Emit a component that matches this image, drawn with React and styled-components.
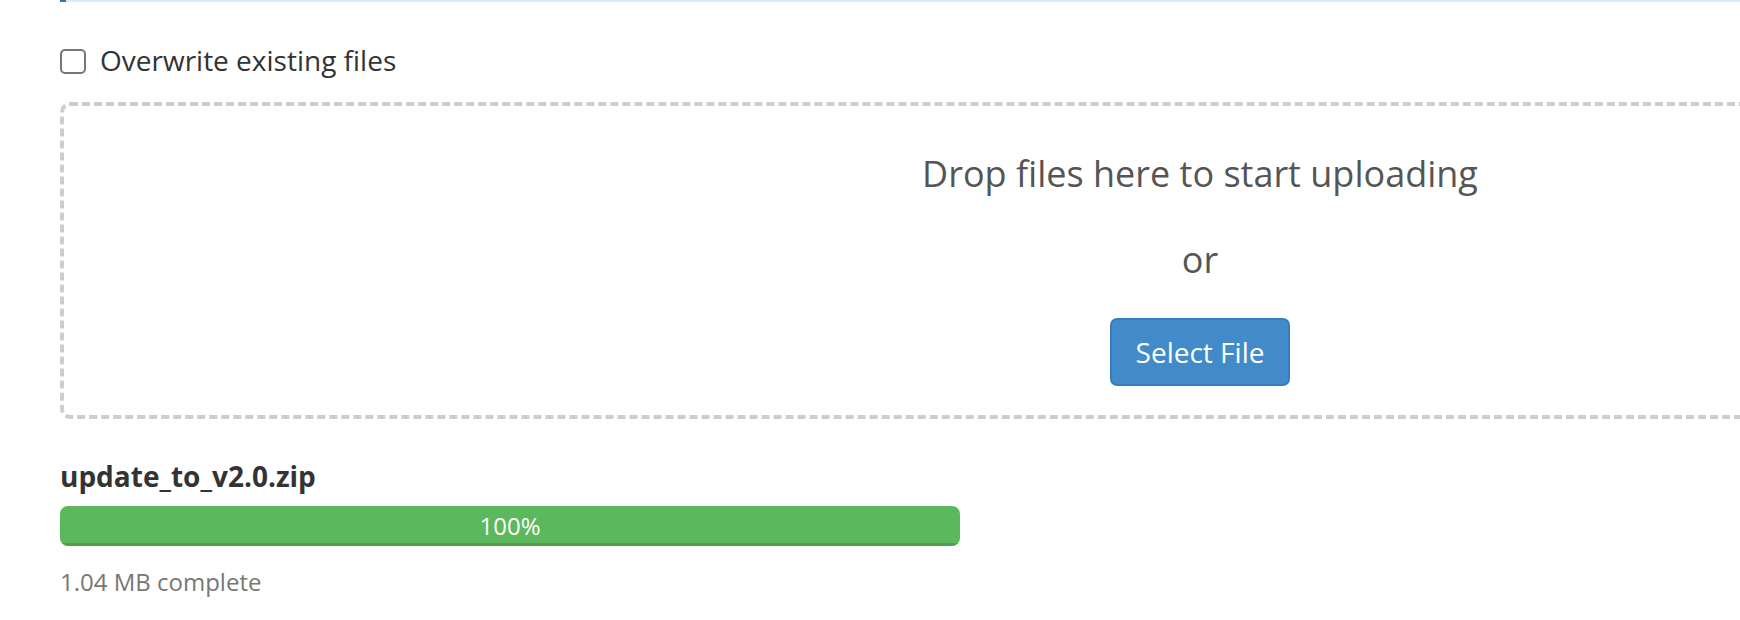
import React from "react";
import styled, { createGlobalStyle } from "styled-components";

const GlobalStyle = createGlobalStyle`
  html, body {
    margin: 0;
    padding: 0;
    overflow: hidden;
    background: #fff;
  }
  body {
    font-family: "Open Sans", "Liberation Sans", sans-serif;
    color: #333;
  }
`;

const Page = styled.div`
  padding: 0 0 0 60px;
`;

const CalloutEdge = styled.div`
  height: 2px;
  background: #d9edf7;
  border-left: 6px solid #2e76b3;
`;

const CheckRow = styled.label`
  display: flex;
  align-items: center;
  gap: 14px;
  margin-top: 38px;
  font-size: 28px;
  line-height: 40px;
  color: #333;
`;

const Checkbox = styled.input.attrs({ type: "checkbox" })`
  appearance: none;
  margin: 2px 0 0;
  width: 26px;
  height: 25px;
  border: 2px solid #777;
  border-radius: 5px;
  background: #fff;
  box-sizing: border-box;
`;

const DropZone = styled.div`
  box-sizing: border-box;
  width: 2280px;
  margin-top: 22px;
  padding: 48px 0 29px;
  border: 4px dashed #cdcdcd;
  border-radius: 10px;
  display: flex;
  flex-direction: column;
  align-items: center;
  color: #555;
`;

const DropTitle = styled.div`
  font-size: 36px;
  line-height: 40px;
`;

const Or = styled.div`
  margin-top: 46px;
  font-size: 36px;
  line-height: 40px;
`;

const Button = styled.button`
  margin-top: 38px;
  height: 68px;
  padding: 12px 24px;
  box-sizing: border-box;
  font-family: inherit;
  font-size: 28px;
  line-height: 40px;
  color: #fff;
  background: #428bca;
  border: 2px solid #357ebd;
  border-radius: 7px;
`;

const FileName = styled.div`
  margin-top: 37px;
  font-size: 28px;
  line-height: 40px;
  font-weight: 700;
  color: #333;
`;

const Track = styled.div`
  margin-top: 10px;
  width: 900px;
  height: 40px;
  border-radius: 8px;
  background: #f5f5f5;
  overflow: hidden;
`;

const Bar = styled.div`
  height: 100%;
  background: #5cb85c;
  box-shadow: inset 0 -3px 0 rgba(0, 0, 0, 0.13);
  color: #fff;
  font-size: 24px;
  line-height: 40px;
  text-align: center;
`;

const Status = styled.div`
  margin-top: 19px;
  font-size: 24px;
  line-height: 34px;
  color: #777;
`;

export default function App() {
  const progress = 100;
  return (
    <>
      <GlobalStyle />
      <Page>
        <CalloutEdge />
        <CheckRow>
          <Checkbox />
          Overwrite existing files
        </CheckRow>
        <DropZone>
          <DropTitle>Drop files here to start uploading</DropTitle>
          <Or>or</Or>
          <Button>Select File</Button>
        </DropZone>
        <FileName>update_to_v2.0.zip</FileName>
        <Track>
          <Bar style={{ width: `${progress}%` }}>{progress}%</Bar>
        </Track>
        <Status>1.04 MB complete</Status>
      </Page>
    </>
  );
}
